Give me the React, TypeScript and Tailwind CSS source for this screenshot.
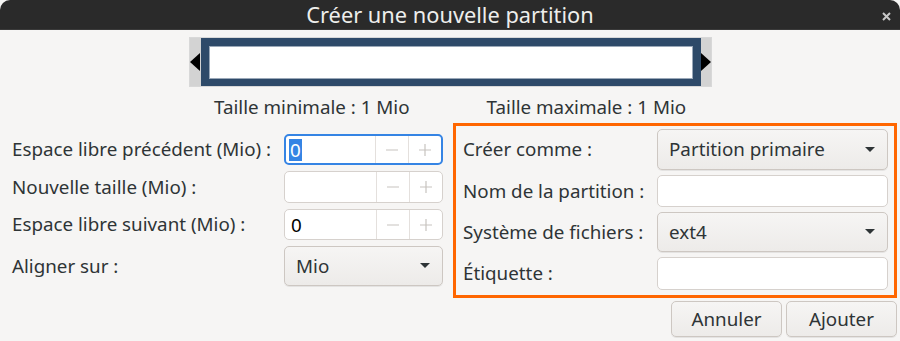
const labelFont = { fontFamily: '"Noto Sans", "Open Sans", sans-serif' }

function SpinButton({ value, focused }: { value?: string; focused?: boolean }) {
  return (
    <div
      className={
        'flex h-full w-full overflow-hidden rounded-[5px] bg-white ' +
        (focused ? 'border-2 border-[#3584e4]' : 'border border-[#d6d1cd]')
      }
    >
      <div className={'flex flex-1 items-center ' + (focused ? 'pl-[3px]' : 'pl-[6px]')}>
        {value && (
          <span
            className={
              'text-[18.8px] leading-[22px] ' +
              (focused ? 'bg-[#3584e4] px-[1px] text-white' : 'text-black')
            }
          >
            {value}
          </span>
        )}
      </div>
      <div className="flex w-[33px] items-center justify-center border-l border-[#e4e0dd] text-[#c7c3bf]">
        <svg width="14" height="14" viewBox="0 0 14 14">
          <path d="M1 7h12" stroke="currentColor" strokeWidth="1.2" />
        </svg>
      </div>
      <div className="flex w-[33px] items-center justify-center border-l border-[#e4e0dd] text-[#c7c3bf]">
        <svg width="14" height="14" viewBox="0 0 14 14">
          <path d="M1 7h12M7 1v12" stroke="currentColor" strokeWidth="1.2" />
        </svg>
      </div>
    </div>
  )
}

function Combo({ value }: { value: string }) {
  return (
    <div className="flex h-full w-full items-center justify-between rounded-[5px] border border-[#cdc7c2] bg-gradient-to-b from-[#f6f5f4] to-[#edebe9] pl-[11px] pr-[12px] shadow-[0_1px_0_rgba(0,0,0,0.07)]">
      <span className="text-[18.8px] text-[#2e3436]">{value}</span>
      <svg width="10" height="6" viewBox="0 0 10 6">
        <path d="M0 0h10L5 5z" fill="#2e3436" />
      </svg>
    </div>
  )
}

function Entry() {
  return <div className="h-full w-full rounded-[5px] border border-[#d6d1cd] bg-white" />
}

function Label({ children }: { children: string }) {
  return <div className="flex items-center text-[18.8px] text-[#2e3436]">{children}</div>
}

export default function App() {
  return (
    <div className="h-[341px] w-[900px] overflow-hidden bg-[#f6f5f4]" style={labelFont}>
      {/* title bar */}
      <div className="relative flex h-[30px] items-center justify-center rounded-t-[10px] border-b border-[#3a3a3a] bg-[#2a2a2a]">
        <span className="text-[21.8px] leading-[28px] text-[#eeeeec]">Créer une nouvelle partition</span>
        <svg
          className="absolute right-[9px] top-[12px]"
          width="9"
          height="9"
          viewBox="0 0 9 9"
        >
          <path d="M1 1l7 7M8 1L1 8" stroke="#c8c8c8" strokeWidth="2" />
        </svg>
      </div>

      {/* partition bar */}
      <div className="mt-[7px] flex justify-center">
        <div className="flex h-[50px] w-[523px] border border-[#d8d8d8] bg-[#d3d3d3]">
          <div className="flex w-[11px] items-center">
            <svg width="10" height="18" viewBox="0 0 10 18">
              <path d="M10 0v18L0 9z" fill="#000" />
            </svg>
          </div>
          <div className="flex-1 border-[8px] border-b-[7px] border-[#2e4a69] bg-white">
            <div className="h-full w-full border border-[#9aa8b8]" />
          </div>
          <div className="flex w-[10px] items-center">
            <svg width="10" height="18" viewBox="0 0 10 18">
              <path d="M0 0v18L10 9z" fill="#000" />
            </svg>
          </div>
        </div>
      </div>

      {/* size labels */}
      <div className="mt-[7px] flex h-[26px] text-[18.8px] leading-[26px] text-[#2e3436]">
        <div className="pl-[214px]">Taille minimale : 1 Mio</div>
        <div className="pl-[77px]">Taille maximale : 1 Mio</div>
      </div>

      {/* forms */}
      <div className="mt-[3px] flex">
        <div className="ml-[12px] mt-[11px] grid grid-cols-[272px_159px] grid-rows-[31px_32px_31px_40px] gap-y-[6px]">
          <Label>Espace libre précédent (Mio) :</Label>
          <SpinButton value="0" focused />
          <Label>Nouvelle taille (Mio) :</Label>
          <SpinButton />
          <Label>Espace libre suivant (Mio) :</Label>
          <SpinButton value="0" />
          <Label>Aligner sur :</Label>
          <Combo value="Mio" />
        </div>

        <div className="ml-[10px] h-[175px] w-[444px] border-[3px] border-[#ff6600] pl-[7px] pr-[6px] pt-[3px]">
          <div className="grid grid-cols-[194px_231px] grid-rows-[41px_32px_40px_33px] gap-y-[5px]">
            <Label>Créer comme :</Label>
            <Combo value="Partition primaire" />
            <Label>Nom de la partition :</Label>
            <Entry />
            <Label>Système de fichiers :</Label>
            <Combo value="ext4" />
            <Label>Étiquette :</Label>
            <Entry />
          </div>
        </div>
      </div>

      {/* buttons */}
      <div className="mt-[3px] flex justify-end gap-[4px] pr-[3px]">
        {['Annuler', 'Ajouter'].map((t) => (
          <div
            key={t}
            className="flex h-[36px] w-[111px] items-center justify-center rounded-[5px] border border-[#cdc7c2] bg-gradient-to-b from-[#f6f5f4] to-[#edebe9] text-[18.8px] text-[#2e3436] shadow-[0_1px_0_rgba(0,0,0,0.07)]"
          >
            {t}
          </div>
        ))}
      </div>
    </div>
  )
}
